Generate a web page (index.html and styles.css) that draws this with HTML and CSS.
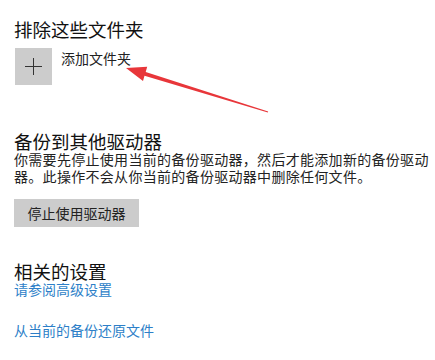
FILE: index.html
```html
<!DOCTYPE html>
<html lang="zh-CN">
<head>
<meta charset="utf-8">
<link rel="stylesheet" href="styles.css">
</head>
<body>
<div class="page">
  <section class="sec exclude">
    <h2 class="title">排除这些文件夹</h2>
    <div class="add-row">
      <div class="plus-box"><span class="plus-h"></span><span class="plus-v"></span></div>
      <span class="add-label">添加文件夹</span>
    </div>
  </section>
  <section class="sec backup">
    <h2 class="title">备份到其他驱动器</h2>
    <p class="desc">你需要先停止使用当前的备份驱动器，然后才能添加新的备份驱动器。此操作不会从你当前的备份驱动器中删除任何文件。</p>
    <button class="btn">停止使用驱动器</button>
  </section>
  <section class="sec related">
    <h2 class="title">相关的设置</h2>
    <a class="link first">请参阅高级设置</a>
    <a class="link second">从当前的备份还原文件</a>
  </section>
  <svg class="arrow" width="435" height="360" viewBox="0 0 435 360">
    <polygon points="126,68 147.2,66.8 145.7,72.0 268.15,111.52 267.85,112.48 144.5,75.8 143.0,81.0" fill="#e8363a"/>
  </svg>
</div>
</body>
</html>
```
FILE: styles.css
```css
* { box-sizing: border-box; }
html, body { margin: 0; padding: 0; background: #fff; }
body {
  font-family: "Noto Sans CJK SC", "Noto Sans", sans-serif;
  color: #1a1a1a;
  width: 435px;
  height: 360px;
  overflow: hidden;
}
.page {
  position: relative;
  padding: 19px 0 0 14px;
  height: 360px;
}
.sec { display: flex; flex-direction: column; align-items: flex-start; }
.title {
  margin: 0;
  font-size: 18.5px;
  font-weight: 400;
  line-height: 20px;
  color: #111;
}
.add-row {
  display: flex;
  align-items: flex-start;
  gap: 9px;
  margin-top: 9px;
  margin-left: 1px;
}
.plus-box {
  position: relative;
  width: 37px;
  height: 37px;
  background: #cccccc;
}
.plus-h {
  position: absolute;
  left: 10px;
  top: 18px;
  width: 17px;
  height: 1px;
  background: #333;
}
.plus-v {
  position: absolute;
  left: 18px;
  top: 10px;
  width: 1px;
  height: 17px;
  background: #333;
}
.add-label {
  font-size: 14px;
  line-height: 20px;
  color: #222;
}
.backup { margin-top: 46px; }
.desc {
  margin: 0;
  font-size: 14px;
  letter-spacing: 0.3px;
  line-height: 17px;
  width: 420px;
  color: #222;
}
.btn {
  margin-top: 14px;
  width: 125px;
  height: 28px;
  border: 0;
  background: #cccccc;
  font-family: inherit;
  font-size: 14px;
  color: #222;
  padding: 0;
}
.related { margin-top: 34px; }
.link {
  font-size: 14px;
  line-height: 17px;
  color: #2d7fc8;
}
.link.second { margin-top: 24px; }
.arrow {
  position: absolute;
  left: 0;
  top: 0;
  pointer-events: none;
}
```
